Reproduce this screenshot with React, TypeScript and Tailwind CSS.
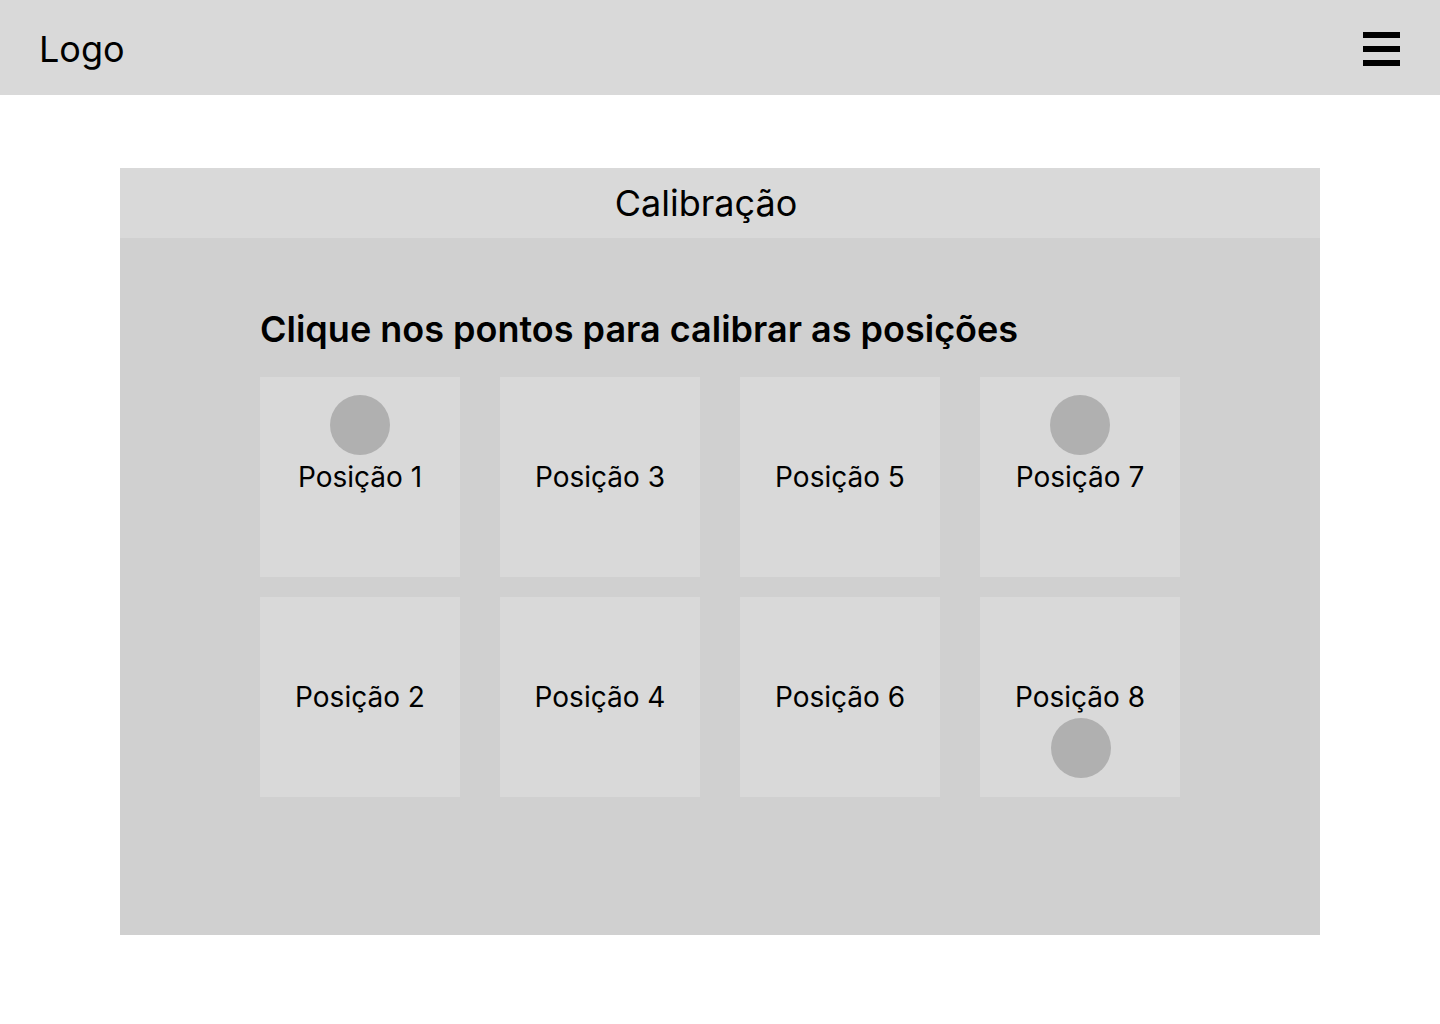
import React from "react";

type Dot = "top" | "bottom" | null;

const cards: { label: string; dot: Dot }[] = [
  { label: "Posição 1", dot: "top" },
  { label: "Posição 3", dot: null },
  { label: "Posição 5", dot: null },
  { label: "Posição 7", dot: "top" },
  { label: "Posição 2", dot: null },
  { label: "Posição 4", dot: null },
  { label: "Posição 6", dot: null },
  { label: "Posição 8", dot: "bottom" },
];

export default function App() {
  return (
    <div
      className="min-h-[1024px] w-full bg-white text-black"
      style={{ fontFamily: "Inter, 'Noto Sans', sans-serif" }}
    >
      <header className="flex h-[95px] items-center justify-between bg-[#d9d9d9] pl-[39px] pr-[40px]">
        <span className="pt-[3px] text-[36px] leading-none">Logo</span>
        <div className="flex flex-col gap-[8px] pt-[3px]">
          <div className="h-[6px] w-[37px] bg-black" />
          <div className="h-[6px] w-[37px] bg-black" />
          <div className="h-[6px] w-[37px] bg-black" />
        </div>
      </header>

      <main className="px-[120px] pt-[73px]">
        <section className="flex h-[767px] flex-col bg-[#d0d0d0]">
          <div className="flex h-[70px] items-center justify-center bg-[#d9d9d9] pr-[28px]">
            <span className="text-[36px] leading-none">Calibração</span>
          </div>
          <div className="px-[140px] pt-[69px]">
            <h1 className="mb-[26px] text-[36px] font-semibold leading-[44px]">
              Clique nos pontos para calibrar as posições
            </h1>
            <div className="grid grid-cols-4 gap-x-[40px] gap-y-[20px]">
              {cards.map((c) => (
                <div
                  key={c.label}
                  className="relative flex h-[200px] w-[200px] items-center justify-center bg-[#d9d9d9]"
                >
                  {c.dot === "top" && (
                    <div className="absolute left-[70px] top-[18px] h-[60px] w-[60px] rounded-full bg-[#b0b0b0]" />
                  )}
                  {c.dot === "bottom" && (
                    <div className="absolute bottom-[19px] left-[71px] h-[60px] w-[60px] rounded-full bg-[#b0b0b0]" />
                  )}
                  <span className="relative text-[28px] leading-none">{c.label}</span>
                </div>
              ))}
            </div>
          </div>
        </section>
      </main>
    </div>
  );
}
